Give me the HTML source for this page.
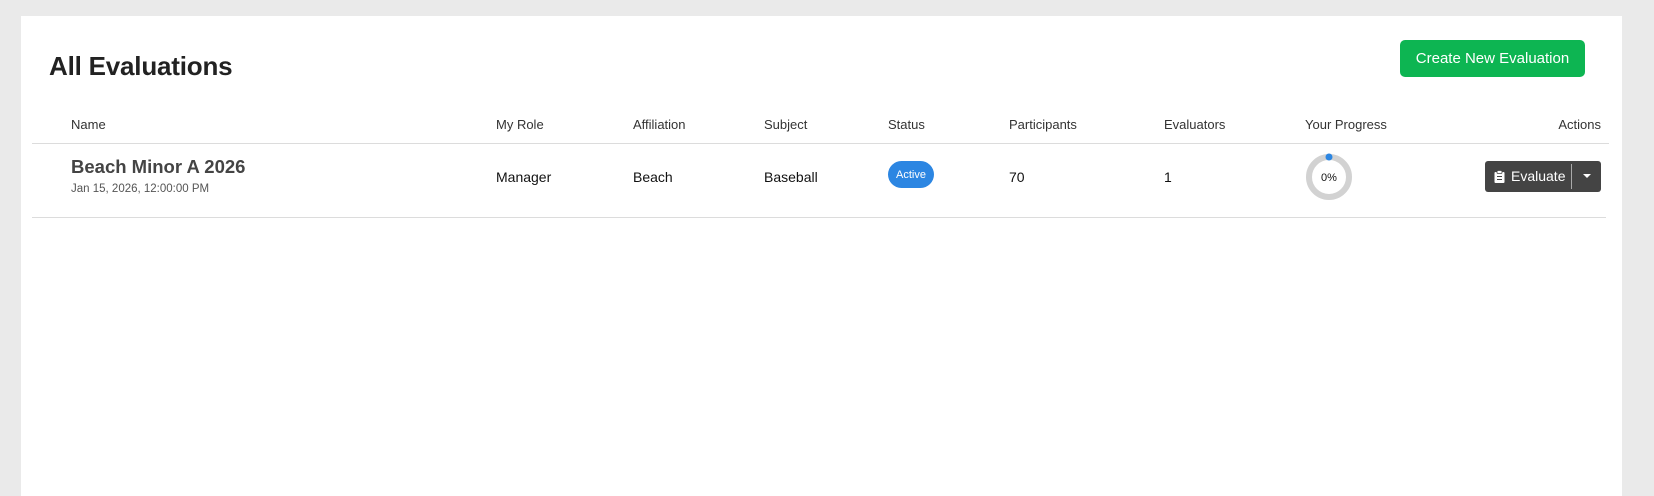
<!DOCTYPE html>
<html><head><meta charset="utf-8"><style>
*{box-sizing:border-box;margin:0;padding:0}
body{width:1654px;height:490px;background:#eaeaea;font-family:"Liberation Sans",sans-serif;position:relative;overflow:hidden;color:#222}
.card{position:absolute;left:21px;top:16px;width:1601px;height:480px;background:#fff}
.a{position:absolute;white-space:nowrap}
h1{position:absolute;left:49px;top:51px;font-size:26px;font-weight:bold;color:#222;letter-spacing:-0.2px}
.btn{position:absolute;left:1400px;top:40px;width:185px;height:37px;background:#0db552;border-radius:5px;color:#fff;font-size:15px;line-height:37px;text-align:center}
.h{top:117px;font-size:13px;color:#333}
.v{top:169px;font-size:14px;color:#111}
.line{position:absolute;height:1px;background:#dcdcdc}
</style></head><body>
<div class="card"></div>
<h1>All Evaluations</h1>
<div class="btn">Create New Evaluation</div>
<div class="a h" style="left:71px">Name</div>
<div class="a h" style="left:496px">My Role</div>
<div class="a h" style="left:633px">Affiliation</div>
<div class="a h" style="left:764px">Subject</div>
<div class="a h" style="left:888px">Status</div>
<div class="a h" style="left:1009px">Participants</div>
<div class="a h" style="left:1164px">Evaluators</div>
<div class="a h" style="left:1305px">Your Progress</div>
<div class="a h" style="right:53px">Actions</div>
<div class="line" style="left:32px;width:1577px;top:143px"></div>
<div class="a" style="left:71px;top:156px;font-size:18.5px;font-weight:bold;color:#444">Beach Minor A 2026</div>
<div class="a" style="left:71px;top:183px;font-size:11.5px;color:#555">Jan 15, 2026, 12:00:00 PM</div>
<div class="a v" style="left:496px">Manager</div>
<div class="a v" style="left:633px">Beach</div>
<div class="a v" style="left:764px">Baseball</div>
<div class="a" style="left:888px;top:161px;width:46px;height:27px;border-radius:14px;background:#2c86e2;color:#fff;font-size:11px;display:flex;align-items:center;justify-content:center">Active</div>
<div class="a v" style="left:1009px">70</div>
<div class="a v" style="left:1164px">1</div>
<svg class="a" style="left:1303px;top:151px" width="52" height="52" viewBox="0 0 52 52"><circle cx="26" cy="26" r="20" fill="none" stroke="#d2d2d2" stroke-width="6"/><circle cx="26" cy="6" r="3.5" fill="#2c86e2"/><text x="26" y="30" font-size="11" text-anchor="middle" font-family="Liberation Sans" fill="#111">0%</text></svg>
<div class="a" style="left:1485px;top:161px;width:116px;height:31px;background:#444;border-radius:3px;color:#fff;font-size:14px">
<svg class="a" style="left:9px;top:9px" width="11" height="13" viewBox="0 0 11 13"><rect x="0.5" y="2" width="10" height="11" rx="1" fill="#fff"/><rect x="3" y="0.5" width="5" height="3" rx="1" fill="#fff" stroke="#444" stroke-width="0.8"/><rect x="3" y="6" width="5" height="1" fill="#444"/><rect x="3" y="9" width="5" height="1" fill="#444"/></svg>
<span class="a" style="left:26px;top:7px">Evaluate</span>
<div class="a" style="left:86px;top:3px;width:1px;height:25px;background:#aaa"></div>
<div class="a" style="left:98px;top:13px;border-left:4px solid transparent;border-right:4px solid transparent;border-top:4px solid #fff"></div>
</div>
<div class="line" style="left:32px;width:1574px;top:217px"></div>
</body></html>
